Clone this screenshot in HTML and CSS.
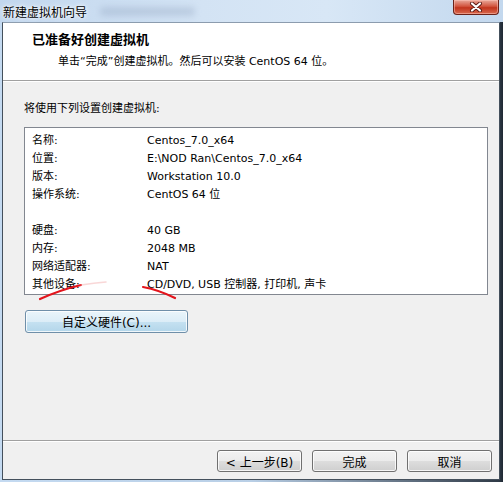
FILE: index.html
```html
<!DOCTYPE html>
<html lang="zh-CN">
<head>
    <meta charset="UTF-8">
    <title>新建虚拟机向导</title>
    <link rel="stylesheet" href="styles.css">
</head>
<body>
    <div class="window">
        <div class="titlebar">
            <span class="title">新建虚拟机向导</span>
            <span class="glass"></span>
            <div class="close">
                <svg width="14" height="10" viewBox="0 0 14 10">
                    <path d="M3 1.5 L11 8.5 M11 1.5 L3 8.5" stroke="#5a1a14" stroke-width="4" stroke-linecap="round"/>
                    <path d="M3 1.5 L11 8.5 M11 1.5 L3 8.5" stroke="#fff" stroke-width="2.2" stroke-linecap="round"/>
                </svg>
            </div>
        </div>

        <div class="client">
            <div class="header">
                <div class="head-title">已准备好创建虚拟机</div>
                <div class="head-sub">单击“完成”创建虚拟机。然后可以安装 CentOS 64 位。</div>
            </div>

            <div class="content">
                <p class="intro">将使用下列设置创建虚拟机:</p>
                <div class="summary">
                    <div class="row"><span class="key">名称:</span><span>Centos_7.0_x64</span></div>
                    <div class="row"><span class="key">位置:</span><span>E:\NOD Ran\Centos_7.0_x64</span></div>
                    <div class="row"><span class="key">版本:</span><span>Workstation 10.0</span></div>
                    <div class="row"><span class="key">操作系统:</span><span>CentOS 64 位</span></div>
                    <div class="row"></div>
                    <div class="row"><span class="key">硬盘:</span><span>40 GB</span></div>
                    <div class="row"><span class="key">内存:</span><span>2048 MB</span></div>
                    <div class="row"><span class="key">网络适配器:</span><span>NAT</span></div>
                    <div class="row"><span class="key">其他设备:</span><span>CD/DVD, USB 控制器, 打印机, 声卡</span></div>
                </div>
                <button class="btn btn-hot">自定义硬件(C)...</button>
            </div>

            <div class="footer">
                <button class="btn">&lt; 上一步(B)</button>
                <button class="btn">完成</button>
                <button class="btn">取消</button>
            </div>
        </div>

        <!-- hand-drawn pen marks over the device row -->
        <svg class="marks" width="503" height="482" viewBox="0 0 503 482">
            <path d="M40 299 Q60 290 81 285" fill="none" stroke="#e3141c" stroke-width="2.2" stroke-linecap="round"/>
            <path d="M81 285 Q94 283 106 282" fill="none" stroke="#f3b0b0" stroke-width="1.5" stroke-linecap="round" opacity="0.5"/>
            <path d="M143 287 Q159 290 175 298" fill="none" stroke="#e3141c" stroke-width="2.2" stroke-linecap="round"/>
        </svg>
    </div>
</body>
</html>
```

FILE: styles.css
```css
body {
    margin: 0;
    overflow: hidden;
    font-family: 'DejaVu Sans', 'Noto Sans CJK SC', sans-serif;
    font-size: 11px;
    color: #000;
}
.window {
    position: relative;
    width: 503px;
    height: 482px;
    display: flex;
    flex-direction: column;
    background: linear-gradient(to right, #c4daf1 0, #c4daf1 2px, #b9cfe6 50%, #2f3a47 499px, #1f2833 100%);
}
.titlebar {
    position: relative;
    height: 22px;
    flex: none;
    background: linear-gradient(to right, #c2d7ee 0%, #d3e3f4 40%, #d8e7f6 65%, #c3d8ee 100%);
}
.title {
    position: absolute;
    left: 3px;
    top: 4px;
    font-family: 'Noto Sans CJK SC', sans-serif;
    font-size: 12px;
    line-height: 16px;
    color: #000;
    text-shadow: 0 0 6px #fff, 0 0 3px #fff;
}
.glass {
    position: absolute;
    left: 100px;
    top: 7px;
    width: 95px;
    height: 9px;
    border-radius: 4px;
    background: rgba(120, 140, 170, 0.25);
    filter: blur(3px);
}
.close {
    position: absolute;
    left: 453px;
    top: 0;
    width: 46px;
    height: 15px;
    display: flex;
    align-items: center;
    justify-content: center;
    border: 1px solid #6b2219;
    border-top: none;
    border-radius: 0 0 4px 4px;
    box-sizing: border-box;
    background: linear-gradient(#e9a99b 0%, #d2553f 45%, #c1341d 55%, #d86a4f 100%);
    box-shadow: inset 0 0 0 1px rgba(255, 200, 190, 0.5);
}
.client {
    flex: 1;
    margin: 0 3px 2px 2px;
    display: flex;
    flex-direction: column;
    border: 1px solid #44505c;
    border-top-color: #8c9cae;
    background: #f0f0f0;
}
.header {
    height: 57px;
    flex: none;
    background: #fff;
    border-bottom: 1px solid #a0a0a0;
    padding-left: 29px;
}
.head-title {
    margin-top: 7px;
    font-family: 'Noto Sans CJK SC', sans-serif;
    font-size: 13px;
    font-weight: bold;
    line-height: 18px;
}
.head-sub {
    margin-top: 5px;
    padding-left: 26px;
    line-height: 18px;
}
.content {
    flex: 1;
    padding: 19px 0 0 21px;
    box-shadow: inset 0 1px #fff;
}
.intro {
    margin: 0 0 9px;
    line-height: 18px;
}
.summary {
    width: 462px;
    padding: 4px 0 0;
    background: #fff;
    border: 1px solid #828790;
}
.row {
    display: flex;
    height: 18px;
    line-height: 18px;
    padding-left: 7px;
}
.key {
    width: 115px;
}
.btn {
    font-family: 'DejaVu Sans', 'Noto Sans CJK SC', sans-serif;
    font-size: 12px;
    color: #000;
    width: 85px;
    height: 22px;
    padding: 0;
    border: 1px solid #707070;
    border-radius: 3px;
    background: linear-gradient(#f2f2f2 0%, #ebebeb 50%, #dddddd 51%, #cfcfcf 100%);
    box-shadow: inset 0 0 0 1px rgba(255, 255, 255, 0.8);
}
.btn-hot {
    width: 163px;
    height: 23px;
    margin: 15px 0 0 1px;
    border-color: #6f8fa9;
    background: linear-gradient(#eaf5fb 0%, #dcedf7 50%, #c5e1f1 51%, #b3d6ea 100%);
}
.footer {
    height: 39px;
    flex: none;
    border-top: 1px solid #a0a0a0;
    box-shadow: inset 0 1px #fff;
    display: flex;
    justify-content: flex-end;
    align-items: flex-start;
    gap: 10px;
    padding: 9px 7px 0 0;
    box-sizing: border-box;
}
.marks {
    position: absolute;
    left: 0;
    top: 0;
    pointer-events: none;
}
```
